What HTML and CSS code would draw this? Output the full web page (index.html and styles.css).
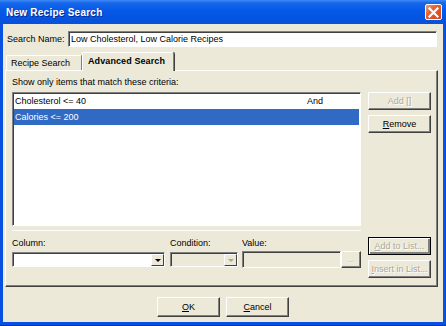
FILE: index.html
```html
<!DOCTYPE html>
<html lang="en">
<head>
	<meta charset="UTF-8" />
	<title>New Recipe Search</title>
	<link rel="stylesheet" href="styles.css">
</head>
<body>
	<div class="window">
		<div class="titlebar">
			<span class="title">New Recipe Search</span>
			<span class="close">
				<svg width="11" height="11" viewBox="0 0 11 11"><path d="M1.5 1.5 L9.5 9.5 M9.5 1.5 L1.5 9.5" stroke="#fff" stroke-width="2.2" stroke-linecap="square" /></svg>
			</span>
		</div>
		<div class="client">
			<div class="name_row">
				<label class="name_label">Search Name:</label>
				<div class="textbox">Low Cholesterol, Low Calorie Recipes</div>
			</div>
			<div class="tabs">
				<div class="tab">Recipe Search</div>
				<div class="tab active">Advanced Search</div>
			</div>
			<div class="panel">
				<div class="caption">Show only items that match these criteria:</div>
				<div class="criteria">
					<div class="list">
						<div class="row"><span class="cond">Cholesterol &lt;= 40</span><span class="join">And</span></div>
						<div class="row selected"><span class="cond">Calories &lt;= 200</span></div>
					</div>
					<div class="side">
						<button class="btn disabled">Add []</button>
						<button class="btn"><u>R</u>emove</button>
					</div>
				</div>
				<div class="builder">
					<div class="fields">
						<div class="sep"></div>
						<div class="field_row">
							<div class="field f_column">
								<div class="lbl">Column:</div>
								<div class="combo"><span class="drop"><span class="arrow"></span></span></div>
							</div>
							<div class="field f_condition">
								<div class="lbl">Condition:</div>
								<div class="combo off"><span class="drop"><span class="arrow"></span></span></div>
							</div>
							<div class="field f_value">
								<div class="lbl">Value:</div>
								<div class="value_box">
									<div class="value_input"></div>
									<button class="btn dots disabled">...</button>
								</div>
							</div>
						</div>
					</div>
					<div class="side lower">
						<button class="btn default disabled"><u>A</u>dd to List...</button>
						<button class="btn disabled"><u>I</u>nsert in List...</button>
					</div>
				</div>
			</div>
			<div class="actions">
				<button class="btn big"><u>O</u>K</button>
				<button class="btn big"><u>C</u>ancel</button>
			</div>
		</div>
	</div>
</body>
</html>
```

FILE: styles.css
```css
body{
	margin: 0;
	font-family: "Liberation Sans", Arial, sans-serif;
	font-size: 9px;
	color: #000;
}

.window{
	width: 446px;
	height: 326px;
	box-sizing: border-box;
	background: #0750e0;
	border-bottom: 1px solid #0033b8;
	display: flex;
	flex-direction: column;
	overflow: hidden;
}

.titlebar{
	height: 24px;
	flex: none;
	display: flex;
	align-items: center;
	justify-content: space-between;
	padding: 0 4px 0 6px;
	background: linear-gradient(#3d8af7 0, #1767ea 12%, #0658e6 45%, #0454e2 75%, #0a50d8 100%);
}

.title{
	color: #fff;
	font-family: "Liberation Sans", Arial, sans-serif;
	font-weight: bold;
	font-size: 10px;
	letter-spacing: 0.25px;
	text-shadow: 1px 1px 0 #0b2a8c;
}

.close{
	width: 17px;
	height: 16px;
	box-sizing: border-box;
	border: 1px solid #fff;
	border-radius: 2px;
	background: linear-gradient(135deg, #f39a78 0, #e4602f 40%, #d0461a 100%);
	display: flex;
	align-items: center;
	justify-content: center;
}

.close svg{
	display: block;
}

.client{
	flex: 1;
	margin: 0 3px 3px 3px;
	background: #ece9d8;
	display: flex;
	flex-direction: column;
}

.name_row{
	display: flex;
	align-items: center;
	margin: 7px 6px 0 4px;
	height: 16px;
}

.name_label{
	width: 61px;
	flex: none;
}

.textbox{
	flex: 1;
	height: 16px;
	box-sizing: border-box;
	background: #fff;
	border: 1px solid;
	border-color: #808080 #fff #fff #808080;
	box-shadow: inset 1px 1px 0 #404040;
	padding: 2px 0 0 2px;
	line-height: 11px;
}

/* tabs */
.tabs{
	display: flex;
	align-items: flex-end;
	height: 18px;
	margin: 5px 0 0 3px;
	position: relative;
	z-index: 1;
}

.tab{
	height: 15px;
	box-sizing: border-box;
	border: 1px solid #fff;
	border-bottom: none;
	border-right-color: #808080;
	box-shadow: 1px 0 0 #404040;
	border-radius: 2px 2px 0 0;
	padding: 2px 0 0 4px;
	line-height: 11px;
	width: 76px;
}

.tab.active{
	height: 19px;
	margin-bottom: -1px;
	width: 92px;
	font-weight: bold;
	padding: 3px 0 0 5px;
	background: #ece9d8;
	letter-spacing: 0.1px;
}

.panel{
	height: 217px;
	box-sizing: border-box;
	margin: 0 5px 0 2px;
	border: 1px solid;
	border-color: #fff #404040 #404040 #fff;
	box-shadow: inset -1px -1px 0 #808080;
	padding: 6px 6px 0 6px;
}

.caption{
	line-height: 11px;
}

.criteria{
	display: flex;
	gap: 7px;
	margin-top: 4px;
}

.list{
	width: 349px;
	height: 134px;
	box-sizing: border-box;
	background: #fff;
	border: 1px solid;
	border-color: #808080 #fff #fff #808080;
	box-shadow: inset 1px 1px 0 #404040;
	padding: 0 1px;
}

.row{
	height: 16px;
	display: flex;
	align-items: center;
	padding-left: 1px;
}

.row.selected{
	background: #316ac5;
	color: #fff;
}

.cond{
	width: 292px;
}

.side{
	width: 63px;
	display: flex;
	flex-direction: column;
	gap: 5px;
}

.side.lower{
	margin-top: 7px;
}

/* buttons */
.btn{
	font: inherit;
	color: #000;
	height: 18px;
	box-sizing: border-box;
	background: #ece9d8;
	border: 1px solid;
	border-color: #fff #404040 #404040 #fff;
	box-shadow: inset -1px -1px 0 #808080;
	padding: 0;
	margin: 0;
	text-align: center;
	line-height: 14px;
}

.btn u{
	text-underline-offset: 1px;
}

.btn.disabled{
	color: #aca899;
	text-shadow: 1px 1px 0 #fff;
}

.btn.default{
	border-color: #000;
	box-shadow: inset 1px 1px 0 #fff, inset -2px -2px 0 #808080, inset -1px -1px 0 #404040;
}

.btn.big{
	height: 20px;
	width: 63px;
}

/* builder */
.builder{
	display: flex;
	gap: 7px;
	margin-top: 4px;
}

.fields{
	width: 349px;
}

.sep{
	height: 0;
	border-top: 1px solid #fcfcf8;
}

.field_row{
	display: flex;
	margin-top: 7px;
}

.lbl{
	line-height: 11px;
	height: 13px;
}

.f_column{
	width: 153px;
	margin-right: 5px;
}

.f_condition{
	width: 68px;
	margin-right: 4px;
}

.f_value{
	width: 119px;
}

.combo{
	height: 15px;
	margin-top: 1px;
	box-sizing: border-box;
	background: #fff;
	border: 1px solid;
	border-color: #808080 #fff #fff #808080;
	box-shadow: inset 1px 1px 0 #404040;
	display: flex;
	justify-content: flex-end;
	padding: 1px 0 0 0;
}

.combo.off{
	background: #ece9d8;
}

.drop{
	width: 13px;
	height: 12px;
	box-sizing: border-box;
	background: #ece9d8;
	border: 1px solid;
	border-color: #fff #404040 #404040 #fff;
	display: flex;
	align-items: center;
	justify-content: center;
}

.arrow{
	width: 0;
	height: 0;
	border-left: 3px solid transparent;
	border-right: 3px solid transparent;
	border-top: 3px solid #000;
}

.combo.off .arrow{
	border-top-color: #aca899;
}

.value_box{
	display: flex;
	height: 17px;
}

.value_input{
	width: 99px;
	box-sizing: border-box;
	background: #ece9d8;
	border: 1px solid;
	border-color: #808080 #fff #fff #808080;
	box-shadow: inset 1px 1px 0 #404040;
}

.btn.dots{
	width: 20px;
	height: 17px;
	line-height: 12px;
	font-size: 7px;
}

.actions{
	display: flex;
	justify-content: center;
	gap: 6px;
	margin-top: 10px;
}
```
